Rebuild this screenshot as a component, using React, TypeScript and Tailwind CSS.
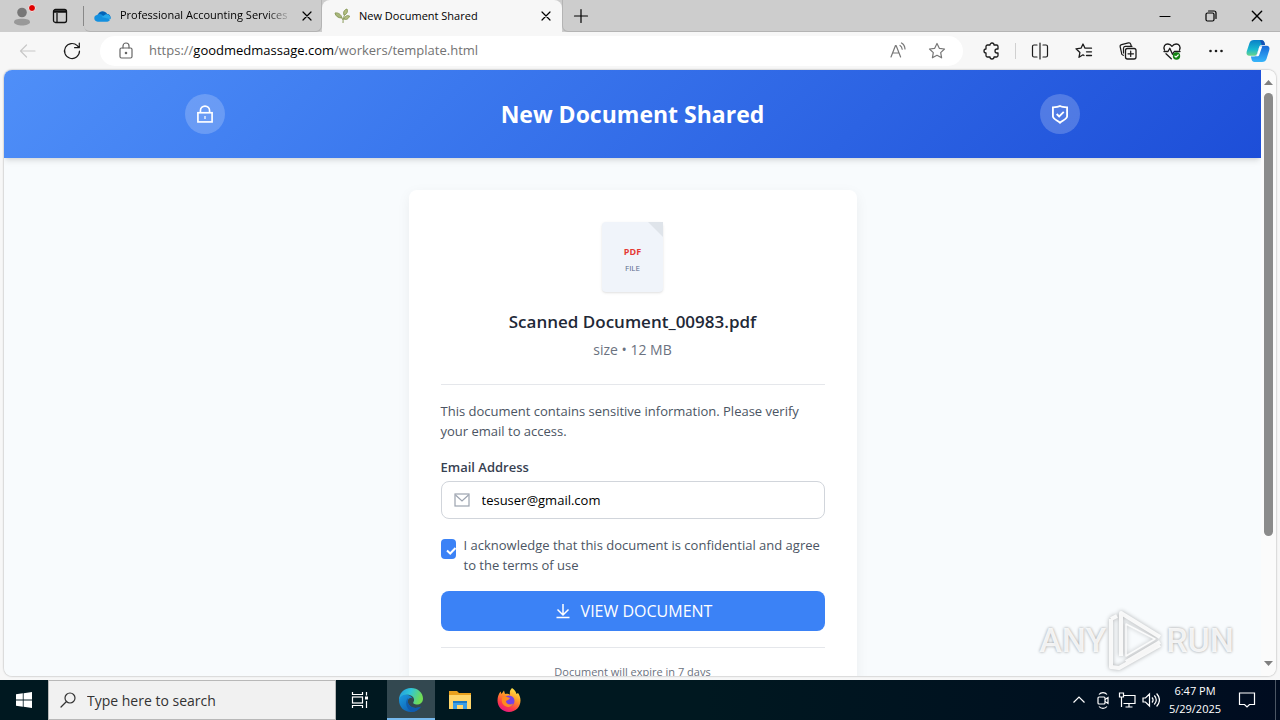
import React from 'react';

type IconProps = { className?: string; children: React.ReactNode; box?: string };

function Line({ className = 'size-5', children, box = '0 0 20 20' }: IconProps) {
  return (
    <svg viewBox={box} className={className} fill="none" stroke="currentColor" strokeWidth="1.2" strokeLinecap="round" strokeLinejoin="round" aria-hidden="true">
      {children}
    </svg>
  );
}

const STAR = 'M10 2.5l2.3 4.8 5.2.7-3.8 3.6.9 5.2L10 14.3l-4.6 2.5.9-5.2L2.5 8l5.2-.7z';

function CloseIcon({ className = 'size-3' }: { className?: string }) {
  return (
    <Line className={className} box="0 0 12 12">
      <path d="M2 2l8 8M10 2l-8 8" />
    </Line>
  );
}

function TabStrip() {
  return (
    <div className="flex h-8 shrink-0 items-stretch bg-[#cdcdcd]">
      <div className="flex w-[84px] items-center">
        <button aria-label="Profile" className="relative ml-3 flex size-5 items-center justify-center">
          <svg viewBox="0 0 20 20" className="size-5">
            <circle cx="10" cy="6.500" r="4.800" fill="#777" />
            <path d="M2 16.500c0-3 3-3.700 8-3.700s8 .7 8 3.700c0 1.500-4 3-8 3s-8-1.500-8-3z" fill="#999" />
          </svg>
          <span className="absolute -top-[2px] right-0 -mr-1 size-2 rounded-full border border-[#eee] bg-[#e00000]" />
        </button>
        <button aria-label="Tab actions" className="ml-[18px] flex size-5 items-center justify-center">
          <svg viewBox="0 0 16 16" className="size-4" fill="none" stroke="#111" strokeWidth="1.3">
            <rect x="1.500" y="1.500" width="13" height="13" rx="2" />
            <path d="M1.500 3.500h13" strokeWidth="2.500" />
            <path d="M5 5v9" />
          </svg>
        </button>
        <span className="ml-auto h-5 w-px bg-[#888]" />
      </div>
      <div className="flex w-[238px] items-center rounded-b-md border-r border-b border-[#b4b4b4] pl-[10px] pr-[7px]">
        <svg viewBox="0 0 18 12" className="mr-[9px] h-3 w-[17px] shrink-0">
          <path d="M4 5C5 1 11-1 14 4c3 0 4 3 3.500 5L9 9z" fill="#0364b8" />
          <path d="M3 5c3-2 5-1 7 1l7 4c-.5 1.200-1.500 2-3 2H4C-1 11.500-.5 5.500 3 5z" fill="#1490df" />
          <path d="M8 7l4-2.500c3-1 6 1.500 5.500 5z" fill="#28a8ea" />
        </svg>
        <span className="min-w-0 flex-1 overflow-hidden whitespace-nowrap text-[11px] [mask-image:linear-gradient(to_right,black_85%,transparent)]">
          Professional Accounting Services
        </span>
        <button aria-label="Close tab" className="ml-2 p-px"><CloseIcon /></button>
      </div>
      <div className="flex w-[240px] items-center rounded-t-lg bg-[#f7f7f7] pl-3 pr-[9px]">
        <svg viewBox="0 0 16 16" className="mr-[9px] size-4 shrink-0" fill="none" stroke="#8b9c5c" strokeWidth="1">
          <path d="M9 15C9 11 9.500 8 12 5M9 12C8 9 6 8 4 7" />
          <path d="M8 10C4 10 1.500 8 1 5c3-.5 6 1 7 5z" fill="#a9b77c" />
          <path d="M10 7c-1-3 0-5 3-6 1 3 0 5-3 6zM10 11c1-3 3-4 5.500-3-1 3-3 4-5.500 3z" fill="#b5bf82" />
        </svg>
        <span className="flex-1 whitespace-nowrap text-[11px]">New Document Shared</span>
        <button aria-label="Close tab" className="p-px"><CloseIcon /></button>
      </div>
      <button aria-label="New tab" className="flex w-9 items-center justify-center rounded-bl-md border-b border-l border-[#b4b4b4]">
        <Line className="size-4" box="0 0 16 16"><path d="M8 1.500v13M1.500 8h13" /></Line>
      </button>
      <div className="flex flex-1 items-center justify-end border-b border-[#b4b4b4]">
        <button aria-label="Minimize" className="flex w-[46px] justify-center">
          <Line className="size-3" box="0 0 12 12"><path d="M1 6.500h10" /></Line>
        </button>
        <button aria-label="Restore" className="flex w-[46px] justify-center">
          <Line className="size-3" box="0 0 12 12"><rect x="1" y="3" width="8" height="8" rx="1.500" /><path d="M3.500 1H9a2 2 0 0 1 2 2v5.500" /></Line>
        </button>
        <button aria-label="Close" className="flex w-[46px] justify-center"><CloseIcon className="size-[14px]" /></button>
      </div>
    </div>
  );
}

function ToolButton({ label, children }: { label: string; children: React.ReactNode }) {
  return <button aria-label={label} className="flex w-11 shrink-0 items-center justify-center">{children}</button>;
}

function Toolbar() {
  return (
    <div className="flex h-[38px] shrink-0 items-center bg-[#f7f7f7] pl-[6px] pr-[2px] text-[#1b1b1b]">
      <button aria-label="Back" disabled className="flex w-11 justify-center text-[#c8c8c8]">
        <Line><path d="M17 10H2.500M8.500 4L2.500 10l6 6" /></Line>
      </button>
      <ToolButton label="Refresh">
        <Line><path d="M17.500 10a7.500 7.500 0 1 1-2.200-5.300L17 6.500M17.300 2v4.700h-4.700" /></Line>
      </ToolButton>
      <div className="ml-[6px] flex h-[30px] flex-1 items-center rounded-full bg-white px-4">
        <Line className="size-5 text-[#666]">
          <rect x="4" y="7" width="12" height="10" rx="1.500" />
          <path d="M7 7V5a3 3 0 0 1 6 0v2" />
          <circle cx="10" cy="12" r=".7" fill="currentColor" />
        </Line>
        <span className="ml-[13px] flex-1 whitespace-nowrap text-[13px] text-[#737373]">
          https://<span className="text-black">goodmedmassage.com</span>/workers/template.html
        </span>
        <button aria-label="Read aloud" className="text-[#777]">
          <Line><path d="M4 16L8.500 4.500h.6L13.600 16M5.500 12h6.500M13 4.500c1.300.8 2 2 2.200 3.700M14.500 2c2.300 1.200 3.300 3.200 3.500 6" /></Line>
        </button>
        <button aria-label="Add to favorites" className="ml-5 text-[#777]"><Line><path d={STAR} /></Line></button>
      </div>
      <span className="w-[6px]" />
      <ToolButton label="Extensions">
        <Line><path d="M6.500 4H9a2 2 0 0 1 4 0h2.500A1.500 1.500 0 0 1 17 5.500V8h-1a2 2 0 0 0 0 4h1v2.500a1.500 1.500 0 0 1-1.500 1.500H13a2 2 0 0 1-4 0H6.500A1.500 1.500 0 0 1 5 14.500V12a2 2 0 0 1 0-4V5.500A1.500 1.500 0 0 1 6.500 4z" strokeWidth="1.300" /></Line>
      </ToolButton>
      <span className="mx-[2px] h-4 w-px bg-[#d0d0d0]" />
      <ToolButton label="Split screen">
        <Line><path d="M10 2v16M7 4H4a1.500 1.500 0 0 0-1.500 1.500v9A1.500 1.500 0 0 0 4 16h3M13 4h3a1.500 1.500 0 0 1 1.500 1.500v9A1.500 1.500 0 0 1 16 16h-3" /></Line>
      </ToolButton>
      <ToolButton label="Favorites">
        <Line><path d="M10 14.500l-1-.7-4 2.500.9-4.800L2 7.800l5-.6L9 3l2 4.200h6.500M12.500 10.800h5M12.500 14.500h5" strokeWidth="1.300" /></Line>
      </ToolButton>
      <ToolButton label="Collections">
        <Line><rect x="7.500" y="7.500" width="10.500" height="10.500" rx="2" strokeWidth="1.300" /><path d="M12.700 10v5.500M10 12.800h5.500M5.500 14.300l-.8-.3a2 2 0 0 1-1.200-2.300L2.200 6a2 2 0 0 1 1.400-2.400l6.800-1.700a2 2 0 0 1 2.400 1.400l.5 2M5.500 12V7a2 2 0 0 1 2-1.700h6.500" /></Line>
      </ToolButton>
      <ToolButton label="Browser essentials">
        <Line>
          <path d="M2.500 9C1 5.500 3 3 5.800 3c2 0 3.300 1 4.200 2.300C10.900 4 12.200 3 14.200 3 17 3 19 5.500 17.500 9M2 10.500h4l1.800-3.300 2.700 6 1.800-2.700H18M4 12.800l5.300 5" strokeWidth="1.300" />
          <circle cx="14.500" cy="15" r="3.700" fill="#128412" stroke="none" />
          <path d="M12.900 15.100l1.100 1.100 2.200-2.200" stroke="white" />
        </Line>
      </ToolButton>
      <ToolButton label="Settings and more">
        <svg viewBox="0 0 20 20" className="size-5" fill="currentColor"><circle cx="4.500" cy="10" r="1.300" /><circle cx="10" cy="10" r="1.300" /><circle cx="15.500" cy="10" r="1.300" /></svg>
      </ToolButton>
      <button aria-label="Copilot" className="flex w-10 shrink-0 items-center justify-center">
        <svg viewBox="0 0 24 24" className="size-6">
          <defs>
            <linearGradient id="cpA" x1="0" y1="0" x2="0" y2="1"><stop stopColor="#0a80c8" /><stop offset=".6" stopColor="#18b8d0" /><stop offset="1" stopColor="#6ad48a" /></linearGradient>
            <linearGradient id="cpB" x1="0" y1="0" x2="0" y2="1"><stop stopColor="#1668d8" /><stop offset="1" stopColor="#37b5fa" /></linearGradient>
          </defs>
          <path d="M8 1h7.500c1.700 0 2.500 1 2.900 2.500l.7 2.500h-3.300c-1.500 0-2.300.8-2.700 2.200l-2 6.300c-.5 1.500-1.300 2.300-3 2.300H3.500C1 16.800 0 15 .7 12.500L3.500 4C4.200 2 5.500 1 8 1z" fill="url(#cpA)" />
          <path d="M16 23H8.500c-1.700 0-2.500-1-2.900-2.500L4.900 17.500h3.300c1.500 0 2.300-.8 2.700-2.200l2-6.300c.5-1.500 1.300-2.300 3-2.300h4.600c2.500 0 3.500 1.800 2.800 4.300L20.500 20c-.7 2-2 3-4.500 3z" fill="url(#cpB)" />
          <path d="M13.800 7.300h2.500l-3 8.500c-.4 1-1 1.500-2 1.500H9.200c1-.3 1.500-1 1.900-2.300l1.800-6c.2-.8.4-1.300.9-1.700z" fill="white" />
          <path d="M14 1.200h1.500c1.700 0 2.500 1 2.900 2.300l.7 2.500h-3.300z" fill="#1551b5" />
        </svg>
      </button>
    </div>
  );
}

function SharePage() {
  return (
    <div className="min-w-0 flex-1 overflow-hidden bg-[#f8fbfd]">
      <header className="bg-[linear-gradient(135deg,#4f8ff8_0%,#3b78ee_35%,#1d4ed8_100%)] px-6 py-6 shadow-md">
        <div className="mx-auto flex max-w-4xl items-center justify-between text-white">
          <span className="flex size-10 items-center justify-center rounded-full bg-white/20">
            <svg viewBox="0 0 24 24" className="size-5" fill="none" stroke="currentColor" strokeWidth="2">
              <rect x="3.500" y="10.500" width="17" height="11" /><path d="M6.500 10.500V8a5.500 5.500 0 0 1 11 0v2.500" /><path d="M12 14.500v3.500" strokeWidth="1.500" />
            </svg>
          </span>
          <h1 className="text-[23px] leading-8 font-bold">New Document Shared</h1>
          <span className="flex size-10 items-center justify-center rounded-full bg-white/20">
            <svg viewBox="0 0 24 24" className="size-5" fill="none" stroke="currentColor" strokeWidth="2.200">
              <path d="M12 2.500c-2 1.300-5 1.500-8.500 1.500v11c0 2.500 4.500 4.500 8.500 7.500 4-3 8.500-5 8.500-7.500V4C17 4 14 3.800 12 2.500zM8 12l3 3 5.500-5.500" />
            </svg>
          </span>
        </div>
      </header>
      <main className="mx-auto mt-8 max-w-md rounded-lg bg-white p-8 shadow-[0_4px_14px_rgba(0,0,0,0.06)]">
        <div className="flex flex-col items-center">
          <div className="relative flex h-[70px] w-[61px] flex-col items-center justify-center rounded-sm bg-[#f0f4fa] pt-[6px] shadow">
            <svg viewBox="0 0 15 15" className="absolute top-0 right-0 size-[15px]"><path d="M0 0h15v15z" fill="#dfe4ea" /></svg>
            <span className="text-[9px] leading-4 font-bold text-[#e53935]">PDF</span>
            <span className="text-[8px] leading-4 text-[#5b6b8c]">FILE</span>
          </div>
          <h2 className="mt-4 text-[17px] leading-7 font-semibold text-[#1f2937]">Scanned Document_00983.pdf</h2>
          <p className="mt-1 text-[14px] leading-5 text-[#6b7280]">size • 12 MB</p>
        </div>
        <form className="mt-6 border-t border-[#e5e7eb] pt-4 text-[13px] leading-5 text-[#4b5563]" onSubmit={(e) => e.preventDefault()}>
          <p>This document contains sensitive information. Please verify<br />your email to access.</p>
          <label htmlFor="email" className="mt-4 block font-semibold text-[#374151]">Email Address</label>
          <div className="relative mt-1">
            <svg viewBox="0 0 16 16" className="absolute top-[11px] left-[13px] size-4" fill="none" stroke="#9ca3af" strokeWidth="1.200">
              <rect x="1" y="2" width="14" height="12" /><path d="M1.500 3L8 9l6.500-6" />
            </svg>
            <input id="email" type="email" defaultValue="tesuser@gmail.com" className="h-[38px] w-full rounded-lg border border-[#d1d5db] bg-white pr-3 pl-10 text-black outline-none" />
          </div>
          <div className="mt-4 flex items-start gap-2">
            <span className="relative mt-1 h-5 w-[15px] shrink-0">
              <input id="ack" type="checkbox" defaultChecked className="block h-5 w-[15px] appearance-none rounded bg-[#3b82f6]" />
              <svg viewBox="0 0 10 8" className="pointer-events-none absolute right-0 bottom-1 h-2 w-[10px]" fill="none" stroke="white" strokeWidth="2"><path d="M1 3.500l3.200 3L9.500 1" /></svg>
            </span>
            <label htmlFor="ack" className="whitespace-nowrap">I acknowledge that this document is confidential and agree<br />to the terms of use</label>
          </div>
          <button type="submit" className="mt-4 flex h-10 w-full items-center justify-center gap-2 rounded-lg bg-[#3b82f6] text-[16px] text-white">
            <svg viewBox="0 0 20 20" className="size-5" fill="none" stroke="currentColor" strokeWidth="1.500"><path d="M10 3v11M4.500 8.500L10 14l5.500-5.500M3.500 16.500h13" /></svg>
            VIEW DOCUMENT
          </button>
          <p className="mt-4 border-t border-[#e5e7eb] pt-4 text-center text-[11px] leading-4 text-[#6b7280]">Document will expire in 7 days</p>
        </form>
      </main>
    </div>
  );
}

function Scrollbar() {
  return (
    <div className="flex w-[15px] shrink-0 flex-col items-center bg-[#fbfbfb] py-[10px]">
      <svg viewBox="0 0 9 5" className="h-[5px] w-[9px]"><path d="M4.500 0L9 5H0z" fill="#7f7f7f" /></svg>
      <div className="mt-2 flex w-full flex-1 flex-col items-center">
        <div className="h-[78%] w-[9px] rounded-full bg-[#8b8b8b]" />
      </div>
      <svg viewBox="0 0 9 5" className="h-[5px] w-[9px]"><path d="M0 0h9L4.500 5z" fill="#7f7f7f" /></svg>
    </div>
  );
}

function Watermark() {
  return (
    <div className="pointer-events-none absolute right-[42px] bottom-1 flex items-center font-[Roboto,sans-serif] text-[34px] leading-none font-medium text-white/85 [text-shadow:0_0_3px_rgba(0,0,0,0.4)]">
      ANY
      <svg viewBox="0 0 60 64" className="h-16 w-[60px] drop-shadow-[0_0_2px_rgba(0,0,0,0.35)]" fill="none" stroke="white" strokeOpacity=".85" strokeWidth="4" strokeLinejoin="round">
        <path d="M15 48V5l39 24M54 34L20 54M5 11v48l8 1 41-23M5 11l6-3" />
        <path d="M20 16v32l29-17z" strokeWidth="1.500" />
      </svg>
      RUN
    </div>
  );
}

function Tray({ label, children }: { label: string; children: React.ReactNode }) {
  return (
    <button aria-label={label} className="flex w-6 justify-center">
      <svg viewBox="0 0 18 18" className="size-[18px]" fill="none" stroke="currentColor" strokeWidth="1.200">{children}</svg>
    </button>
  );
}

function Taskbar() {
  return (
    <footer className="flex h-10 shrink-0 items-stretch bg-[linear-gradient(90deg,#001820_0%,#001820_55%,#000c20_100%)] text-white">
      <button aria-label="Start" className="flex w-12 items-center justify-center">
        <svg viewBox="0 0 16 16" className="size-4" fill="white"><path d="M0 2.300l6.800-1v6.300H0zM7.600 1.200L16 0v7.600H7.600zM0 8.400h6.800v6.300L0 13.700zM7.600 8.400H16V16l-8.400-1.200z" /></svg>
      </button>
      <div className="flex w-72 items-center border border-[#b8b8b8] bg-[#f1f1f1] pl-[11px] text-[#333]">
        <Line className="size-4 shrink-0" box="0 0 16 16"><circle cx="10" cy="6" r="5" /><path d="M6.500 9.500L1 15" /></Line>
        <input aria-label="Type here to search" placeholder="Type here to search" className="ml-[11px] min-w-0 flex-1 bg-transparent text-[14px] outline-none placeholder:text-[#333] placeholder:opacity-100" />
      </div>
      <button aria-label="Task view" className="flex w-12 items-center justify-center">
        <svg viewBox="0 0 18 18" className="size-[18px]" fill="none" stroke="white" strokeWidth="1.200"><path d="M1.500 1v2.500h10V1M1.500 17v-2.500h10V17M15.500 1v3.500M15.500 10v7" /><rect x="1.500" y="6" width="10" height="6" /><path d="M14 7h3" strokeWidth="3" /></svg>
      </button>
      <button aria-label="Microsoft Edge" className="ml-[3px] flex w-12 items-center justify-center border-b-2 border-[#76b9ed] bg-[#334850] pt-[2px]">
        <svg viewBox="0 0 24 24" className="size-6">
          <defs>
            <linearGradient id="edA" x1="0" y1="0" x2="1" y2=".3"><stop stopColor="#2197dc" /><stop offset=".5" stopColor="#30c5d8" /><stop offset="1" stopColor="#70dc55" /></linearGradient>
            <linearGradient id="edB" x1="0" y1="0" x2="1" y2="1"><stop stopColor="#1a9be0" /><stop offset="1" stopColor="#0c4ea5" /></linearGradient>
          </defs>
          <path d="M0 12C0 5 5 0 12 0s12 5 12 10.500c0 4-3 6-6 6-2.500 0-4.500-1-3.500-2.500 1-1.300.8-4-1-5.500C10 5.500 3 6 0 12z" fill="url(#edA)" />
          <path d="M0 12c.5-4 5-6 9-5 2 .5 4 2 4.500 3.500-3-1.500-5.500 1-4.500 4.500 1.500 4.500 7 6.500 13 3.500C20 22 16 24 12 24 5 24 0 19 0 12z" fill="url(#edB)" />
          <path d="M9 10c-3 3-2.500 11 4 13.800 4 0 7-2.300 9-5.300-6 3-11.500 1-13-3.500-.6-2-.4-3.600 0-5z" fill="#0f5bae" />
        </svg>
      </button>
      <button aria-label="File Explorer" className="ml-px flex w-12 items-center justify-center">
        <svg viewBox="0 0 22 18" className="h-[18px] w-[22px]"><path d="M0 0h8l2 2h12v4H0z" fill="#e9a11d" /><path d="M0 4h22v14H0z" fill="#ffd66b" /><path d="M4 18v-8h14v8h-4v-4H8v4z" fill="#3a9ee5" /><path d="M4 10h14v2H4z" fill="#1b7ac4" /></svg>
      </button>
      <button aria-label="Firefox" className="ml-px flex w-12 items-center justify-center">
        <svg viewBox="0 0 24 24" className="size-6">
          <defs><linearGradient id="ffA" x1=".8" y1="0" x2=".3" y2="1"><stop stopColor="#fff04d" /><stop offset=".4" stopColor="#ff9a26" /><stop offset=".75" stopColor="#ff3b47" /><stop offset="1" stopColor="#e31587" /></linearGradient></defs>
          <path d="M15 0c3 2 4 4 4.500 6L21 5c1.500 2 2.500 4.500 2.500 7.500C23.500 19 18.500 24 12 24S.5 19 .5 12.500C.5 9 1.500 6 3.500 3.500L4.500 6 7 2.500 8 6c2-.5 4 0 5 .8C12.500 4 13 2 15 0z" fill="url(#ffA)" />
          <circle cx="12" cy="13" r="5.500" fill="#7542e5" />
          <path d="M5.500 9C8 8 10 9 13 10c-1 2-3 2-4 3 0 3 4 4.500 7 2.500-1 3.500-5 4.500-8 2.500-3-1.700-4-5-2.500-9z" fill="#ff8a1f" />
        </svg>
      </button>
      <div className="ml-auto flex items-center">
        <Tray label="Show hidden icons"><path d="M3.500 11.500L9 6l5.500 5.500" /></Tray>
        <Tray label="Meet now"><rect x="4" y="6" width="7" height="7" rx="1" /><path d="M11 8.500l3-2v6l-3-2M5 3.500C7 1 11 1 13 3.500M5 15.500c2 2.500 6 2.500 8 0" /></Tray>
        <Tray label="Network"><path d="M5 4.500h12v8H5.500M11 12.500V16M7.500 16h7M1.500 2h4v4h-4zM3.500 6v10" /></Tray>
        <Tray label="Volume"><path d="M1 7v4h2.500L7.500 15V3L3.500 7zM10 6.500c1.300 1.500 1.300 3.500 0 5M12.300 4.500c2.400 2.700 2.400 6.300 0 9M14.600 2.500c3.500 4 3.500 9 0 13" /></Tray>
        <div className="w-16 text-center text-[11px] leading-[18px] whitespace-nowrap">6:47 PM<br />5/29/2025</div>
        <button aria-label="Notifications" className="flex w-10 justify-center">
          <svg viewBox="0 0 18 18" className="size-[18px]" fill="none" stroke="white" strokeWidth="1.200"><path d="M1.500 2h15v11.500h-5L9 16l-2.500-2.500h-5z" /></svg>
        </button>
        <span className="ml-2 h-10 w-[5px] border-l border-[#4b5664]" />
      </div>
    </footer>
  );
}

export default function App() {
  return (
    <div className="flex h-screen flex-col overflow-hidden bg-[#f7f7f7] font-['Open_Sans','Noto_Sans',sans-serif] text-black">
      <TabStrip />
      <Toolbar />
      <div className="relative mx-1 mb-1 flex min-h-0 flex-1 overflow-hidden rounded-lg shadow-[0_0_2px_rgba(0,0,0,0.4)]">
        <SharePage />
        <Scrollbar />
        <Watermark />
      </div>
      <Taskbar />
    </div>
  );
}
